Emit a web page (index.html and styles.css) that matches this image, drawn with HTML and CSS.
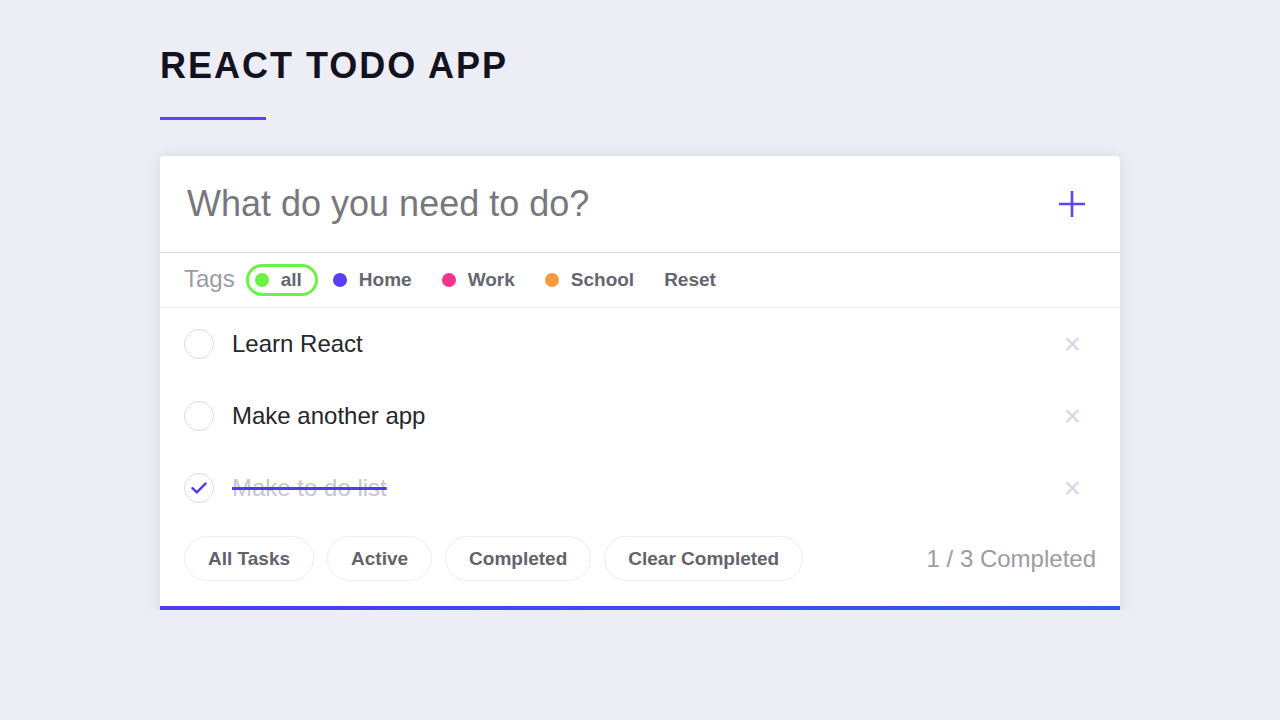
FILE: index.html
```html
<!DOCTYPE html>
<html>
  <head>
    <meta charset="UTF-8">
    <meta name="viewport" content="width=device-width">
    <title>React Todo App</title>
    <link rel="stylesheet" href="styles.css">
  </head>
  <body>
    <div class="app">
      <h1 class="title">REACT TODO APP</h1>
      <div class="title-line"></div>

      <div class="todo-card">
        <div class="todo-input">
          <input type="text" placeholder="What do you need to do?">
          <button class="btn-add" aria-label="Add">
            <svg width="28" height="28" viewBox="0 0 28 28">
              <path d="M14 1v26M1 14h26" stroke="#5a48f2" stroke-width="2.6" fill="none"/>
            </svg>
          </button>
        </div>

        <div class="tags">
          <span class="tags-label">Tags</span>
          <span class="tag tag-active"><i class="dot dot-green"></i>all</span>
          <span class="tag"><i class="dot dot-blue"></i>Home</span>
          <span class="tag"><i class="dot dot-pink"></i>Work</span>
          <span class="tag"><i class="dot dot-orange"></i>School</span>
          <span class="tag">Reset</span>
        </div>

        <ul class="todo-list">
          <li class="todo-item">
            <span class="check"></span>
            <span class="todo-text">Learn React</span>
            <span class="remove">&times;</span>
          </li>
          <li class="todo-item">
            <span class="check"></span>
            <span class="todo-text">Make another app</span>
            <span class="remove">&times;</span>
          </li>
          <li class="todo-item done">
            <span class="check">
              <svg width="16" height="12" viewBox="0 0 16 12">
                <path d="M1.5 6.2l4.3 4.2L14.5 1.6" stroke="#4f3cf0" stroke-width="2.4" fill="none" stroke-linecap="round" stroke-linejoin="round"/>
              </svg>
            </span>
            <span class="todo-text">Make to do list</span>
            <span class="remove">&times;</span>
          </li>
        </ul>

        <div class="todo-footer">
          <div class="filters">
            <button class="pill">All Tasks</button>
            <button class="pill">Active</button>
            <button class="pill">Completed</button>
            <button class="pill">Clear Completed</button>
          </div>
          <span class="count">1 / 3 Completed</span>
        </div>
      </div>
    </div>
  </body>
</html>
```

FILE: styles.css
```css
html, body {
  margin: 0;
  padding: 0;
  background-color: #ededf6;
  font-family: 'Liberation Sans', Arial, sans-serif;
}

.app {
  width: 960px;
  margin: 0 auto;
  padding-top: 45px;
}

.title {
  margin: 0;
  font-size: 36px;
  font-weight: bold;
  letter-spacing: 2px;
  line-height: 42px;
  color: #13131f;
}

.title-line {
  width: 106px;
  height: 3px;
  margin-top: 30px;
  background-color: #5a42f5;
}

.todo-card {
  margin-top: 36px;
  background-color: white;
  border-radius: 4px;
  box-shadow: 0px 2px 16px rgba(40, 40, 90, 0.12);
  border-bottom: 4px solid #4a3ef0;
  border-image: linear-gradient(to right, #4d3bf2, #2f5ae8) 1;
  border-top: 0;
  border-left: 0;
  border-right: 0;
  overflow: hidden;
}

.todo-input {
  display: flex;
  align-items: center;
  height: 96px;
  padding: 0 34px 0 27px;
  border-bottom: 1px solid #dcdce8;
}

.todo-input input {
  flex: 1;
  border: none;
  outline: none;
  font-family: 'Liberation Sans', Arial, sans-serif;
  font-size: 36px;
  color: #333;
  padding: 0;
}

.todo-input input::placeholder {
  color: #77777d;
}

.btn-add {
  border: none;
  background: none;
  padding: 0;
  width: 28px;
  height: 28px;
  cursor: pointer;
}

.tags {
  display: flex;
  align-items: center;
  height: 54px;
  padding: 0 24px;
  border-bottom: 1px solid #ececf2;
}

.tags-label {
  font-size: 24px;
  color: #9b9ba6;
  margin-right: 11px;
  margin-top: -2px;
}

.tag {
  display: flex;
  align-items: center;
  font-size: 19px;
  font-weight: bold;
  color: #65656f;
  margin-right: 30px;
  height: 32px;
}

.tag-active {
  border: 3px solid #6cf244;
  border-radius: 16px;
  padding: 0 13px 0 6px;
  box-sizing: border-box;
  margin-right: 15px;
}

.dot {
  display: inline-block;
  width: 14px;
  height: 14px;
  border-radius: 50%;
  margin-right: 12px;
}

.dot-green { background-color: #6cf244; }
.dot-blue { background-color: #5a3ef5; }
.dot-pink { background-color: #f5358b; }
.dot-orange { background-color: #f79a40; }

.todo-list {
  list-style: none;
  margin: 0;
  padding: 0;
}

.todo-item {
  display: flex;
  align-items: center;
  height: 72px;
  padding: 0 39px 0 24px;
}

.check {
  display: flex;
  align-items: center;
  justify-content: center;
  width: 30px;
  height: 30px;
  box-sizing: border-box;
  border: 1px solid #dcdcec;
  border-radius: 50%;
  margin-right: 18px;
}

.todo-text {
  flex: 1;
  font-size: 24px;
  color: #26262c;
}

.done .todo-text {
  color: #c6c6cf;
  text-decoration: line-through;
  text-decoration-color: #4f3cf0;
  text-decoration-thickness: 3px;
}

.remove {
  font-size: 30px;
  color: #d6d6e6;
  line-height: 1;
}

.todo-footer {
  display: flex;
  align-items: center;
  justify-content: space-between;
  padding: 0 24px 25px 24px;
  margin-top: 12px;
}

.filters {
  display: flex;
  gap: 13px;
}

.pill {
  height: 45px;
  padding: 0 23px;
  border: 1px solid #ececf4;
  border-radius: 23px;
  background-color: white;
  font-family: 'Liberation Sans', Arial, sans-serif;
  font-size: 19px;
  font-weight: bold;
  color: #62626d;
  cursor: pointer;
}

.count {
  font-size: 24px;
  color: #9b9ba6;
}
```
